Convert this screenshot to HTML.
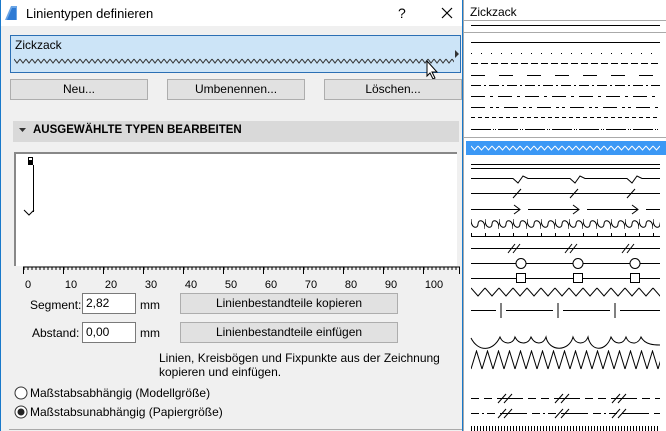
<!DOCTYPE html>
<html><head><meta charset="utf-8"><style>
body{margin:0;width:666px;height:431px;overflow:hidden;background:#fff;font-family:"Liberation Sans",sans-serif;font-size:12px;color:#000;position:relative}
.a{position:absolute}
.btn{position:absolute;background:#e1e1e1;border:1px solid #adadad;box-sizing:border-box;text-align:center;font-size:12px;line-height:18px}
.inp{position:absolute;background:#fff;border:1px solid #7a7a7a;box-sizing:border-box;padding-left:3px;line-height:19px}
</style></head><body>
<div class="a" style="left:0;top:0;width:463px;height:431px;background:#f0f0f0;border-left:1px solid #1979ca;border-right:1px solid #1979ca;box-sizing:border-box"></div>
<div class="a" style="left:1px;top:0;width:461px;height:26px;background:#fff"></div>
<svg class="a" style="left:4px;top:5px" width="14" height="16"><path d="M1 15 L7 1 L13 1 L13 15Z" fill="#6aa5e6"/><path d="M3 15 L8 3 L12 3 L12 15Z" fill="#2d7ad4"/></svg>
<div class="a" style="left:26px;top:6px;font-size:13px">Linientypen definieren</div>
<div class="a" style="left:398px;top:5px;font-size:14px">?</div>
<svg class="a" style="left:441px;top:7px" width="12" height="12"><path d="M1 1L11 11M11 1L1 11" stroke="#000" stroke-width="1.2"/></svg>
<div class="a" style="left:10px;top:35px;width:451px;height:38px;background:#cce4f7;border:1px solid #2b6fb4;box-sizing:border-box"></div>
<div class="a" style="left:15px;top:38px">Zickzack</div>
<svg class="a" style="left:14px;top:55px" width="440" height="12"><defs><pattern id="zz" width="6" height="12" patternUnits="userSpaceOnUse"><path d="M0 4L3 8L6 4" fill="none" stroke="#333" stroke-width="1"/></pattern></defs><rect width="440" height="12" fill="url(#zz)"/></svg>
<svg class="a" style="left:455px;top:50px" width="5" height="8"><path d="M0 0L4 4L0 8Z" fill="#333"/></svg>
<svg class="a" style="left:426px;top:60px" width="14" height="20"><path d="M1 1L1 16L4 13L7 19L9 18L6 12L11 12Z" fill="#fff" stroke="#000"/></svg>
<div class="btn" style="left:10px;top:79px;width:138px;height:21px">Neu...</div>
<div class="btn" style="left:167px;top:79px;width:138px;height:21px">Umbenennen...</div>
<div class="btn" style="left:324px;top:79px;width:138px;height:21px">Löschen...</div>
<div class="a" style="left:13px;top:121px;width:446px;height:21px;background:#d9d9d9"></div>
<svg class="a" style="left:19px;top:128px" width="8" height="6"><path d="M0 0L7 0L3.5 4Z" fill="#333"/></svg>
<div class="a" style="left:33px;top:124px;font-weight:bold;font-size:11.5px">AUSGEWÄHLTE TYPEN BEARBEITEN</div>
<div class="a" style="left:14px;top:152px;width:443px;height:114px;background:#fff;border-top:2px solid #888;border-left:2px solid #888;box-sizing:border-box"></div>
<svg class="a" style="left:20px;top:155px" width="20" height="65"><rect x="8.5" y="2.5" width="4" height="3" fill="none" stroke="#000"/><rect x="8" y="6" width="5" height="4" fill="#000"/><path d="M13.5 10V57" stroke="#000"/><path d="M4 55L9 60L14 55" fill="none" stroke="#000"/></svg>
<svg class="a" style="left:20px;top:266px" width="440" height="28">
<path d="M3 1H443" stroke="#000"/>
<g stroke="#000">
<path d="M3.5 1v7M43.5 1v7M83.5 1v7M123.5 1v7M163.5 1v7M203.5 1v7M243.5 1v7M283.5 1v7M323.5 1v7M363.5 1v7M403.5 1v7M439.5 1v7"/>
</g>
<defs><pattern id="tk" width="4" height="5" patternUnits="userSpaceOnUse" x="3.5"><path d="M0.5 0V4" stroke="#000"/></pattern></defs>
<rect x="3" y="1" width="437" height="4" fill="url(#tk)"/>
<g font-size="11" font-family="Liberation Sans" text-anchor="middle"><text x="8" y="22">0</text><text x="51" y="22">10</text><text x="91" y="22">20</text><text x="131" y="22">30</text><text x="171" y="22">40</text><text x="211" y="22">50</text><text x="251" y="22">60</text><text x="291" y="22">70</text><text x="331" y="22">80</text><text x="371" y="22">90</text><text x="414" y="22">100</text></g>
</svg>
<div class="a" style="left:30px;top:298px">Segment:</div>
<div class="inp" style="left:82px;top:293px;width:54px;height:21px">2,82</div>
<div class="a" style="left:140px;top:298px">mm</div>
<div class="btn" style="left:180px;top:293px;width:218px;height:21px;line-height:19px">Linienbestandteile kopieren</div>
<div class="a" style="left:32px;top:326px">Abstand:</div>
<div class="inp" style="left:82px;top:322px;width:54px;height:21px">0,00</div>
<div class="a" style="left:140px;top:326px">mm</div>
<div class="btn" style="left:180px;top:322px;width:218px;height:21px;line-height:19px">Linienbestandteile einfügen</div>
<div class="a" style="left:159px;top:351px;line-height:14px">Linien, Kreisbögen und Fixpunkte aus der Zeichnung<br>kopieren und einfügen.</div>
<svg class="a" style="left:14px;top:386px" width="14" height="40"><circle cx="7" cy="7" r="6" fill="#fff" stroke="#333"/><circle cx="7" cy="26" r="6" fill="#fff" stroke="#333"/><circle cx="7" cy="26" r="3.5" fill="#222"/></svg>
<div class="a" style="left:30px;top:386px">Maßstabsabhängig (Modellgröße)</div>
<div class="a" style="left:30px;top:405px">Maßstabsunabhängig (Papiergröße)</div>
<div class="a" style="left:9px;top:429px;width:453px;height:1px;background:#aaa"></div>

<div class="a" style="left:463px;top:0;width:203px;height:431px;background:#fff;border-left:1px solid #aaa;box-sizing:border-box"></div>
<div class="a" style="left:470px;top:5px">Zickzack</div>
<svg class="a" style="left:463px;top:0" width="203" height="431">
<defs>
<pattern id="z2" width="7" height="10" patternUnits="userSpaceOnUse" x="8" y="144"><path d="M0 2L3.5 6L7 2" fill="none" stroke="#fff"/></pattern>
<pattern id="wv" width="14" height="14" patternUnits="userSpaceOnUse" x="8" y="217"><path d="M0 2C0 12 7 12 7 7C7 2 14 2 14 12" fill="none" stroke="#000"/></pattern>
<pattern id="z3" width="14" height="14" patternUnits="userSpaceOnUse" x="8" y="286"><path d="M0 2L7 10L14 2" fill="none" stroke="#000"/></pattern>
<pattern id="z4" width="11" height="20" patternUnits="userSpaceOnUse" x="8" y="350"><path d="M0 19L5.5 1L11 19" fill="none" stroke="#000"/></pattern>
<pattern id="tt" width="14" height="6" patternUnits="userSpaceOnUse" x="8" y="233"><path d="M0.5 0V6" stroke="#000"/></pattern>
<pattern id="t2" width="3" height="6" patternUnits="userSpaceOnUse" x="8" y="426"><path d="M0.5 0V6" stroke="#000"/></pattern>
</defs>
<g stroke="#000" fill="none">
<path d="M8 25.5H197"/>
<path d="M8 42.5H197"/>
<path d="M8 53.5H197" stroke-dasharray="1 9"/>
<path d="M8 63.5H197" stroke-dasharray="7 3"/>
<path d="M8 75.5H197" stroke-dasharray="14 14"/>
<path d="M8 85.5H197" stroke-dasharray="10 3 2 3"/>
<path d="M8 96.5H197" stroke-dasharray="14 5 3 5"/>
<path d="M8 107.5H197" stroke-dasharray="14 5 3 3 3 5"/>
<path d="M8 117.5H197" stroke-dasharray="4 3"/>
<path d="M8 129.5H197" stroke-dasharray="20 2 1 1 1 2"/>
<path d="M8 164.5H197M8 168.5H197"/>
<path d="M8 178.5H50L55 183L60 176L65 178.5H107L112 183L117 176L122 178.5H164L169 183L174 176L179 178.5H197"/>
<path d="M8 193.5H197M50 198L58 189M107 198L115 189M164 198L172 189"/>
<path d="M8 209.5H57M51 205L57 209.5L51 214M65 209.5H116M110 205L116 209.5L110 214M124 209.5H175M169 205L175 209.5L169 214M183 209.5H197"/>
<path d="M8 236.5H197"/>
<path d="M8 248.5H197M45 253L52 244M50 253L57 244M102 253L109 244M107 253L114 244M159 253L166 244M164 253L171 244"/>
<path d="M8 263.5H197"/><circle cx="58" cy="263.5" r="5" fill="#fff"/><circle cx="115" cy="263.5" r="5" fill="#fff"/><circle cx="172" cy="263.5" r="5" fill="#fff"/>
<path d="M8 278.5H197"/><rect x="53.5" y="273.5" width="9" height="9" fill="#fff"/><rect x="110.5" y="273.5" width="9" height="9" fill="#fff"/><rect x="167.5" y="273.5" width="9" height="9" fill="#fff"/>
<path d="M8 310.5H33M43 310.5H90M100 310.5H147M157 310.5H197M38 303V318M95 303V318M152 303V318"/>
<path d="M8 338C15 352 30 352 37 337C40 345 50 345 52 337C56 345 65 345 68 337C72 345 80 345 83 337C86 352 106 352 110 337C113 345 122 345 125 337C128 352 143 352 148 337C152 345 160 345 163 337C166 345 175 345 178 337C182 345 192 345 197 345"/>
<path d="M8 398.5H197" stroke-dasharray="8 5 8 5 4 0 22 5"/>
<path d="M35 403L43 394M41 403L49 394M92 403L100 394M98 403L106 394M149 403L157 394M155 403L163 394"/>
<path d="M8 413.5H197" stroke-dasharray="8 3 2 3 8 5 27 5"/>
<path d="M35 418L43 409M41 418L49 409M92 418L100 409M98 418L106 409M149 418L157 409M155 418L163 409"/>
</g>
<rect x="0" y="20" width="203" height="1" fill="#aaa"/>
<rect x="0" y="32" width="203" height="1" fill="#aaa"/>
<rect x="0" y="137" width="203" height="1" fill="#aaa"/>
<rect x="3" y="141" width="200" height="14" fill="#3b98f5"/>
<rect x="8" y="145" width="189" height="8" fill="url(#z2)"/>
<rect x="8" y="217" width="189" height="13" fill="url(#wv)"/>
<rect x="8" y="233" width="189" height="4" fill="url(#tt)"/>
<rect x="8" y="287" width="189" height="11" fill="url(#z3)"/>
<rect x="8" y="350" width="189" height="20" fill="url(#z4)"/>
<rect x="8" y="426" width="189" height="5" fill="url(#t2)"/>
</svg>
</body></html>
